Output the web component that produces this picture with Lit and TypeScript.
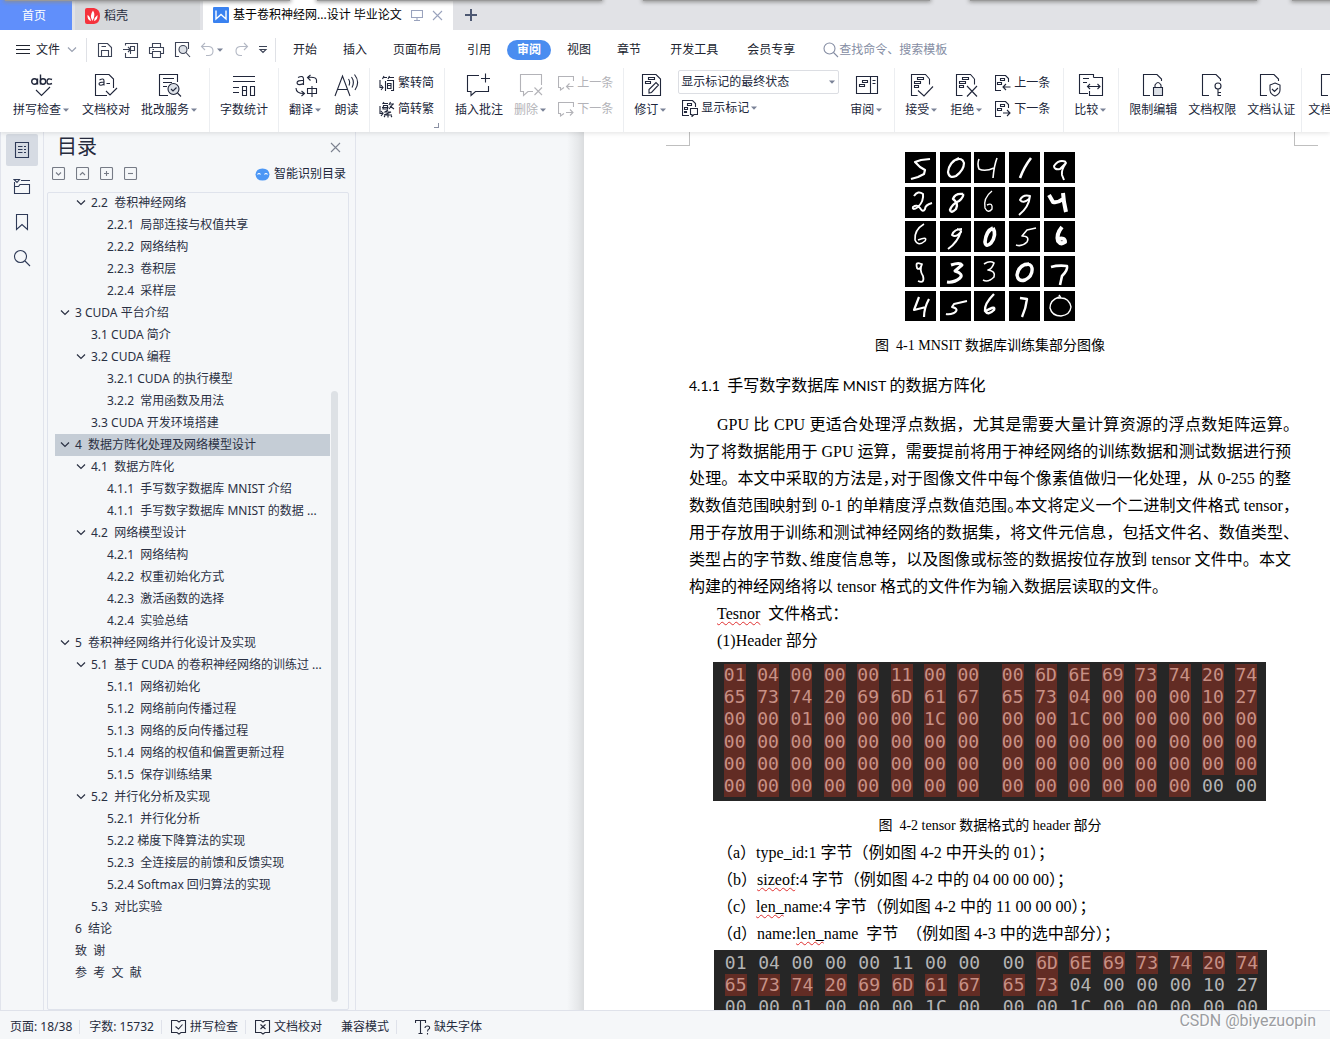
import { LitElement, html, svg, css, nothing } from "lit";
import { customElement, property, state } from "lit/decorators.js";
import { classMap } from "lit/directives/class-map.js";

const ic = (w: number, h: number, body: unknown, vb = `0 0 ${w} ${h}`) => svg`<svg width=${w} height=${h} viewBox=${vb} fill="none" stroke="currentColor" stroke-width="1.1" aria-hidden="true">${body}</svg>`;

const caret = html`<svg class="caret" width="6" height="4" viewBox="0 0 6 4" aria-hidden="true"><path d="M0 0.5H6L3 3.8Z" fill="#7a8297"/></svg>`;

const markedPage = svg`<path d="M19.500 6V11.500M7.500 22.500H1.500V1.500H15.500L19.500 6"/><path d="M7.500 4.500h6v2h-6zM4.500 8.500h6v2h-6zM4.500 12.500h4v2h-4z"/>`;
const plainPage = svg`<path d="M8 22.500H1.500V1.500H15L19.500 6V8"/>`;

const icons: Record<string, unknown> = {
  spell: ic(24, 24, svg`<g stroke-width="1.400"><circle cx="4.500" cy="8.500" r="2.800"/><path d="M7.500 5.500V11.500M10.500 1.500V11.500M22 6.500Q17 4.500 17 8.500Q17 12.500 22 10.500"/><circle cx="13" cy="8.500" r="2.700"/></g><path d="M6 17L11.500 22.500L20 14"/>`),
  proof: ic(24, 24, svg`<path d="M13 22.500H1.500V1.500H15L19.500 6V15"/><path d="M5.500 7Q10 4.500 10 8V12.500M10 9Q5 9 5 11Q6 13.500 10 11M12.500 10.500H16M12 18L16 22L23 15"/>`),
  service: ic(24, 24, svg`<path d="M10 22.500H1.500V1.500H19.500V9M5 5.500H16M5 9.500H14M5 13.500H9"/><circle cx="15.500" cy="16" r="5.500" fill="#dde1e7"/><path d="M19.500 20L23 23.500M13 16L15 18L18.500 14.500"/>`),
  count: ic(24, 24, svg`<path d="M1 3.500H23M1 8.500H23M1 14.500H7M1 19.500H7M10.500 13V22.500H14.500V13.500H10.500M10 17.500H14.500M18.500 13V22.500H22.500V13.500H18.500"/>`),
  translate: ic(24, 24, svg`<path d="M4 4.500Q9.500 2 9.500 6V12M9.500 7.500Q3 7 3 10Q4 13 9.500 10.500M22.500 10V7Q22 3.500 13.500 4.500M16.500 2L13.500 4.500L16.500 7.500M2 15Q2 20.500 10 20.500M7.500 18L10.500 20.500L7.500 23M13.500 15.500H22.500V20.500H13.500ZM18 13V24"/>`),
  read: ic(25, 24, svg`<path d="M1 23L8.500 3L16 23M3.500 16.500H13.500M14.500 6Q16.500 9 15 12.500M17.500 4Q21 9 18 14.500M20.500 1.500Q26.500 9 21 17"/>`),
  comment: ic(26, 24, svg`<path d="M13 2.500H1.500V18.500H5V22.500L9.500 18.500H22.500V13M19.500 0.500V9.500M15 5.500H24"/>`),
  remove: ic(24, 24, svg`<path d="M22.500 12V1.500H1.500V18.500H4.500V22.500L9 18.500H14M15.500 14.500L23 22M23 14.500L15.500 22"/>`),
  prevNote: ic(16, 16, svg`<path d="M15.500 6V1.500H0.500V12.500H2.500V15L6 12.500M15.500 11.500H8.500M11.500 8.500L8.500 11.500L11.500 14.500"/>`),
  nextNote: ic(16, 16, svg`<path d="M15.500 6V1.500H0.500V12.500H2.500V15L6 12.500M8 11.500H15M12 8.500L15 11.500L12 14.500"/>`),
  revise: ic(21, 24, svg`<path d="M1.500 22.500V1.500H15L19.500 6V22.500Z"/><path d="M7.500 4.500h6v2h-6zM4.500 8.500h5v2h-5zM8 20V16.500L15 9.500L17.500 12L10.500 19.500Z"/>`),
  pane: ic(24, 24, svg`<path d="M1.500 3.500H22.500V20.500H1.500ZM15.500 3.500V20.500M17.500 7.500H20.500M17.500 10.500H20.500M7.500 7.500h5v2h-5zM4.500 11.500h5v2h-5z"/>`),
  accept: ic(24, 24, svg`${markedPage}<path d="M8 17.500L14 23L23 13.500"/>`),
  reject: ic(24, 24, svg`${markedPage}<path d="M12 13L22 23.500M22 13L12 23.500"/>`),
  prevMark: ic(16, 16, svg`<path d="M6 15.500H0.500V0.500H10.500L13.500 3.500V7M5.500 3.500h4v2h-4zM2.500 7.500h4v2h-4zM15.500 12H8M11 9L8 12L11 15"/>`),
  nextMark: ic(16, 16, svg`<path d="M6 15.500H0.500V0.500H10.500L13.500 3.500V7M5.500 3.500h4v2h-4zM2.500 7.500h4v2h-4zM8 12H15M12 9L15 12L12 15"/>`),
  showMark: ic(16, 17, svg`<path d="M7 15.500H0.500V0.500H10.500L13.500 3.500V7M5.500 3.500h4v2h-4zM2.500 7.500h3v2h-3zM2.500 11.500h2v1h-2zM8.500 8.500H15.500V14.500H12L10 16.500V14.500H8.500Z"/>`),
  compare: ic(26, 24, svg`<path d="M10 20.500H1.500V1.500H15.500V4.500M15.500 4.500H24.500V22.500H11.500V18M5 5.500H11M5 9.500H9M9.500 13.500H22M12 11L9.500 13.500L12 16M19.500 11L22 13.500L19.500 16"/>`),
  restrict: ic(22, 24, svg`${plainPage}<path d="M11.500 14.500H20.500V22.500H11.500Z" fill="#dde1e7"/><path d="M13 14.500V12Q16 7 19 12V14.500"/>`),
  rights: ic(22, 24, svg`${plainPage}<circle cx="17" cy="13" r="3"/><path d="M17 16V23M17 19.500H20M17 22.500H20"/>`),
  cert: ic(24, 24, svg`${plainPage}<path d="M16 10L21 12V17Q21 21 16 23Q11 21 11 17V12ZM13 16L15.500 18.500L19 15"/>`),
  toSimple: ic(16, 17, svg`<path d="M5 1L3.500 4M4.500 2.500H8M10.500 1L9 4M10 2.500H15M6.500 6V16M8 5.500H14.500V15.500H12M8.500 8.500H12V13.500H8.500ZM8.500 10.500H12M1 5V12.500H3.500M2 10L4 12.500L2 15"/>`),
  toTrad: ic(16, 17, svg`<path d="M5 1L3.500 3M4 2.500H9M4.500 4.500H8.500V8H4ZM3 6.500H9.500M11.500 1L10 4M10.500 3H15M14 3L10 8M11 5L15 8M9 9L6 11H12L5 14H13M9 13V16.500M6 15L5 16M12 15L13 16M1 5V12.500H3.500M2 10L4 12.500L2 15"/>`),
  save: ic(16, 16, svg`<path d="M1.500 1.500H10.500L14.500 5.500V14.500H1.500ZM4.500 14V8.500H11.500V14M4.500 4.500H9"/>`),
  exportPdf: ic(17, 16, svg`<path d="M3.500 3.500V1.500H15.500V15.500H3.500V11M1 7.500H8M6 5L8.500 7.500L6 10M8.500 12V4.500H12.500V8.500H9"/>`),
  print: ic(17, 16, svg`<path d="M4.500 5V1.500H12.500V5M4 11.500H1.500V5.500H15.500V11.500H13M4.500 9.500H12.500V15.500H4.500ZM4.500 7.500H6"/>`),
  preview: ic(17, 17, svg`<path d="M5 15.500H1.500V1.500H14.500V8"/><circle cx="9" cy="8.500" r="4" fill="#dde1e7"/><path d="M12 11.500L16 16"/>`),
  undo: ic(15, 15, svg`<path d="M5 1L1.500 4.500L5 8M1.500 4.500H9Q13 5 13 9Q13 13.500 8.500 13.500H6"/>`),
  redo: ic(15, 15, svg`<path d="M10 1L13.500 4.500L10 8M13.500 4.500H6Q2 5 2 9Q2 13.500 6.500 13.500H8"/>`),
  more: ic(10, 9, svg`<path d="M1 1.500H9M2 4.500H8L5 7.500Z"/>`),
  search: ic(16, 16, svg`<circle cx="6.500" cy="6.500" r="5.500"/><path d="M10.500 10.500L15 15"/>`),
  navToc: ic(16, 18, svg`<path d="M1.500 1.500H14.500V16.500H1.500ZM4 5.500H8.500M10 5.500H12M4 8.500H8.500M10 8.500H12M4 11.500H8.500M10 11.500H12"/>`),
  navTree: ic(18, 18, svg`<path d="M1 2.500H6.500L4 5.500ZM8 3.500H17M1.500 5V16.500H16.500V7.500H7L5.500 9.500H1.500"/>`),
  navMark: ic(14, 18, svg`<path d="M1.500 1.500H12.500V16.500L7 11.500L1.500 16.500Z"/>`),
  navFind: ic(18, 18, svg`<circle cx="7.500" cy="7.500" r="6"/><path d="M12 12L17 17"/>`),
  boxDown: ic(14, 14, svg`<rect x="0.500" y="0.500" width="12" height="12" rx="1"/><path d="M4 5.500L6.500 8L9 5.500"/>`),
  boxUp: ic(14, 14, svg`<rect x="0.500" y="0.500" width="12" height="12" rx="1"/><path d="M4 8L6.500 5.500L9 8"/>`),
  boxPlus: ic(14, 14, svg`<rect x="0.500" y="0.500" width="12" height="12" rx="1"/><path d="M4 6.500H9M6.500 4V9"/>`),
  boxMinus: ic(14, 14, svg`<rect x="0.500" y="0.500" width="12" height="12" rx="1"/><path d="M4 6.500H9"/>`),
  close: ic(11, 11, svg`<path d="M1 1L10 10M10 1L1 10"/>`),
  screen: ic(12, 12, svg`<path d="M0.500 1.500H11.500V8.500H0.500ZM6 8.500V11.500M3 11.500H9"/>`),
  plus: ic(12, 12, svg`<path d="M6 0V12M0 6H12" stroke-width="2"/>`),
  menu: ic(14, 11, svg`<path d="M0 1.500H14M0 5.500H14M0 9.500H14"/>`),
  chev: ic(10, 6, svg`<path d="M1 0.500L5 4.500L9 0.500" stroke-width="1.200"/>`),
  stSpell: ic(16, 16, svg`<path d="M6 1.500H0.500V13.500H6L8 15L10 13.500H14.500V1.500H10L8 3ZM4.500 7.500L7.500 10L11.500 5.500"/>`),
  stProof: ic(16, 16, svg`<path d="M6 1.500H0.500V13.500H6L8 15L10 13.500H14.500V1.500H10L8 3ZM5.500 5.500L10.500 10M10.500 5.500L5.500 10"/>`),
  stFont: ic(16, 16, svg`<path d="M0.500 4V1.500H10.500V4M5.500 1.500V14M3.500 14.500H7.500M10 9Q10 7 12.500 7Q15 7 14.500 9.500Q12.500 10.500 12.500 12.500M12.500 14V15.500"/>`),
};

interface Entry { depth: number; text: string; open?: boolean; }
const toc: Entry[] = [
  { depth: 1, text: "2.2  卷积神经网络", open: true },
  { depth: 2, text: "2.2.1  局部连接与权值共享" },
  { depth: 2, text: "2.2.2  网络结构" },
  { depth: 2, text: "2.2.3  卷积层" },
  { depth: 2, text: "2.2.4  采样层" },
  { depth: 0, text: "3 CUDA 平台介绍", open: true },
  { depth: 1, text: "3.1 CUDA 简介" },
  { depth: 1, text: "3.2 CUDA 编程", open: true },
  { depth: 2, text: "3.2.1 CUDA 的执行模型" },
  { depth: 2, text: "3.2.2  常用函数及用法" },
  { depth: 1, text: "3.3 CUDA 开发环境搭建" },
  { depth: 0, text: "4  数据方阵化处理及网络模型设计", open: true },
  { depth: 1, text: "4.1  数据方阵化", open: true },
  { depth: 2, text: "4.1.1  手写数字数据库 MNIST 介绍" },
  { depth: 2, text: "4.1.1  手写数字数据库 MNIST 的数据 ..." },
  { depth: 1, text: "4.2  网络模型设计", open: true },
  { depth: 2, text: "4.2.1  网络结构" },
  { depth: 2, text: "4.2.2  权重初始化方式" },
  { depth: 2, text: "4.2.3  激活函数的选择" },
  { depth: 2, text: "4.2.4  实验总结" },
  { depth: 0, text: "5  卷积神经网络并行化设计及实现", open: true },
  { depth: 1, text: "5.1  基于 CUDA 的卷积神经网络的训练过 ...", open: true },
  { depth: 2, text: "5.1.1  网络初始化" },
  { depth: 2, text: "5.1.2  网络前向传播过程" },
  { depth: 2, text: "5.1.3  网络的反向传播过程" },
  { depth: 2, text: "5.1.4  网络的权值和偏置更新过程" },
  { depth: 2, text: "5.1.5  保存训练结果" },
  { depth: 1, text: "5.2  并行化分析及实现", open: true },
  { depth: 2, text: "5.2.1  并行化分析" },
  { depth: 2, text: "5.2.2 梯度下降算法的实现" },
  { depth: 2, text: "5.2.3  全连接层的前馈和反馈实现" },
  { depth: 2, text: "5.2.4 Softmax 回归算法的实现" },
  { depth: 1, text: "5.3  对比实验" },
  { depth: 0, text: "6  结论" },
  { depth: 0, text: "致  谢" },
  { depth: 0, text: "参  考  文  献" },
];

/* Handwriting samples: [stroke width, path] in a 31-unit cell, row by row. */
const samples: [number, string][] = [
  [2.2, "M25 7L16 8L10 10L15 15L20 18L19 22L13 25L6 27"],
  [2.2, "M19 6Q9 10 8 20Q9 27 16 24Q24 18 24 11Q22 5 16 8"],
  [1.6, "M5 7Q3 12 5 17Q11 20 20 16M23 6Q20 14 19 26"],
  [2.6, "M22 6Q15 15 11 26"],
  [2, "M22 10Q15 7 10 14Q10 18 16 17L22 11Q17 18 18 23L20 28"],
  [2, "M9 9Q13 3 18 7Q19 14 13 20Q7 24 8 20Q12 17 15 21Q18 26 20 22Q20 18 27 16"],
  [2.4, "M23 7Q15 6 13 12Q19 16 16 22Q11 27 10 23Q12 17 19 14Q24 10 23 7"],
  [1.4, "M18 4Q9 11 11 21Q14 27 18 22Q19 15 13 18"],
  [2, "M21 9Q14 7 11 13Q14 17 20 12L21 9Q20 20 10 28"],
  [4, "M5 8L9 15Q14 16 19 12M19 6L20 15L22 25"],
  [1.6, "M19 3Q9 9 10 19Q13 26 20 20Q23 15 13 19"],
  [2, "M22 8Q14 8 12 14Q16 17 21 11Q22 9 17 8M21 10Q18 21 8 28"],
  [3.6, "M19 7Q12 10 11 21Q12 27 17 22Q23 14 19 7"],
  [1.6, "M27 7L18 9L13 15Q21 15 18 21Q13 26 7 24"],
  [4, "M18 6Q12 13 14 20Q17 24 21 21Q21 16 14 18"],
  [1.8, "M16 8Q10 5 12 12Q15 15 17 8Q14 14 18 20Q20 28 13 25"],
  [3, "M11 9Q20 6 22 9L15 15Q24 18 20 22Q14 27 7 26"],
  [1.6, "M10 8Q16 4 20 7Q18 13 14 14Q22 15 20 21Q14 27 9 24"],
  [3.4, "M20 8Q10 8 8 19Q9 26 16 24Q24 20 23 12Q22 7 16 9"],
  [2.6, "M7 11Q14 9 23 10Q24 14 18 20L16 29"],
  [2.2, "M14 6L9 19L21 16M24 8Q19 17 19 26"],
  [2, "M27 10L14 13L12 16Q20 18 14 22Q9 24 6 23"],
  [2.4, "M20 3Q10 13 11 20Q14 25 20 19Q22 14 12 20"],
  [2.4, "M11 7L18 8Q17 17 13 26"],
  [1.4, "M15 6Q6 9 6 17Q8 25 17 25Q26 24 27 16Q25 7 17 7L13 7M17 7L15 4"],
];

const hexRows = [
  "01 04 00 00 00 11 00 00 00 6D 6E 69 73 74 20 74",
  "65 73 74 20 69 6D 61 67 65 73 04 00 00 00 10 27",
  "00 00 01 00 00 00 1C 00 00 00 1C 00 00 00 00 00",
  "00 00 00 00 00 00 00 00 00 00 00 00 00 00 00 00",
  "00 00 00 00 00 00 00 00 00 00 00 00 00 00 00 00",
  "00 00 00 00 00 00 00 00 00 00 00 00 00 00 00 00",
].map((r) => r.split(" "));

@customElement("hex-dump")
export class HexDump extends LitElement {
  @property({ type: Number }) from = 0;
  @property({ type: Number }) to = 0;

  static styles = css`
    :host { display: block; background: #262626; padding: 2px 3px 4px 5px; }
    table { width: 100%; table-layout: fixed; border-collapse: collapse; font: 18px/22px "DejaVu Sans Mono", monospace; color: #b4b4b4; }
    td { padding: 0; height: 22px; text-align: center; }
    .gap { width: 11px; }
    .byte { display: block; width: 22px; margin: 0 auto; }
    .on { background: #622c24; color: #c79186; }
    tr:nth-child(3) .byte { padding-bottom: 1px; }
  `;

  render() {
    return html`<table><tbody>${hexRows.map((row, r) => html`<tr>${row.map((b, c) => {
      const i = r * 16 + c;
      return html`${c === 8 ? html`<td class="gap"></td>` : nothing}<td><span class=${classMap({ byte: true, on: i >= this.from && i < this.to })}>${b}</span></td>`;
    })}</tr>`)}</tbody></table>`;
  }
}

@customElement("app-root")
export class AppRoot extends LitElement {
  @state() private selected = 11;
  @state() private tab = "审阅";

  static styles = css`
    :host { display: block; font: 12px/18px "Noto Sans", "Noto Sans CJK SC", sans-serif; color: #262b3d; }
    * { box-sizing: border-box; }
    button, select, input { font: inherit; color: inherit; background: none; border: 0; padding: 0; margin: 0; border-radius: 0; white-space: nowrap; }
    svg { display: block; flex: none; }
    h1, h2, p, ul, figure { margin: 0; padding: 0; font-weight: 400; list-style: none; }
    .app { height: 100vh; min-height: 480px; display: grid; grid-template-rows: 30px 102px minmax(0, 1fr) 29px; grid-template-columns: minmax(0, 1fr); overflow: hidden; position: relative; background: #f5f7f9; }

    .tabs { display: flex; background: #e1e2e6; }
    .tabs > * { padding-top: 2px; }
    .tabs .home { width: 72px; background: #608ffb; color: #fff; padding-right: 4px; }
    .docer { width: 125px; margin: 0 3px; background: #d6d8db; display: flex; align-items: center; gap: 4px; }
    .tabs .docer { padding-left: 10px; }
    .doc { width: 250px; background: #fff; display: flex; align-items: center; padding: 0 11px 0 10px; color: #000; }
    .doc .name { margin: 0 auto 0 4px; white-space: nowrap; }
    .doc .tool { color: #9aa3bd; margin-left: 9px; }
    .tabs .add { color: #4d5872; padding: 0 12px; }
    .edge { position: absolute; top: -2px; left: 5px; right: 0; display: grid; grid-template-columns: 285px 27px 285px 41px 287px 40px 287px 35px 287px; pointer-events: none; }
    .edge span { height: 3px; }
    .edge span:nth-child(odd) { background: #999; box-shadow: 0 0 4px 1px #8d8d8d; }

    .ribbon { background: #fff; position: relative; z-index: 1; box-shadow: 0 1px 5px rgba(0, 0, 0, 0.12); overflow: hidden; clip-path: inset(0 0 -6px 0); }
    .menu { display: flex; align-items: center; height: 38px; color: #20242f; padding-top: 1px; }
    .quick { display: flex; align-items: center; gap: 9px; padding: 0 7px 0 10px; color: #3c4356; height: 24px; border-left: 1px solid #dfe1e6; border-right: 1px solid #dfe1e6; }
    .quick .off { color: #b3b8c4; }
    .file { display: flex; align-items: center; gap: 6px; padding: 0 9px 0 16px; }
    .file svg:last-child { color: #9aa1b1; margin-left: 1px; }
    .mtabs { display: flex; padding-left: 4px; }
    .mtab { padding: 1px 13px; }
    .mtab.wide { margin-left: 3px; }
    .mtab.on { background: #4a8df0; color: #fff; border-radius: 10px; padding: 1px 10px; margin: 0 3px; font-weight: 700; }
    .find { display: flex; align-items: center; color: #858da3; margin-left: 15px; }
    .find input { width: 120px; color: #858da3; outline: 0; }
    .find input::placeholder { color: #858da3; opacity: 1; }

    .tools { display: flex; align-items: stretch; height: 64px; gap: 11px; padding-left: 13px; color: #20263a; }
    .tool-btn { display: flex; flex-direction: column; align-items: center; gap: 4px; padding-top: 5px; height: 56px; flex: none; }
    .lab { display: flex; align-items: center; }
    .lab .caret { margin: 0 2px 0 2px; }
    .off { color: #b3b3b8; }
    .sep { width: 1px; background: #eceef1; margin: 0 -1px; flex: none; }
    .sep.tight { margin: 0 -5px; }
    .pair { display: flex; flex-direction: column; gap: 8px; padding-top: 6px; margin-left: -1px; flex: none; position: relative; }
    .mini { display: flex; align-items: center; gap: 3px; height: 18px; }
    .pair.apart { margin-right: 3px; margin-left: 0; }
    .corner { position: absolute; right: -5px; bottom: 4px; width: 5px; height: 5px; border: solid #8a90a3; border-width: 0 1px 1px 0; }
    .picker { display: block; position: relative; width: 161px; flex: none; }
    .picker select { appearance: none; display: block; width: 100%; height: 24px; border: 1px solid #dcdee3; border-radius: 2px; padding: 0 2px; }
    .picker .caret { position: absolute; right: 4px; top: 10px; }
    .show { display: flex; flex-direction: column; gap: 5px; padding-top: 2px; flex: none; margin-left: -1px; }
    .show .mini { margin-left: 4px; }

    .work { display: flex; min-height: 0; }
    .rail { width: 44px; border: solid #e1e4ec; border-width: 0 1px; display: flex; flex-direction: column; gap: 4px; padding: 2px 5px; flex: none; color: #2e3a57; }
    .rail button { height: 32px; display: grid; place-items: center; border-radius: 2px; }
    .rail .on { background: #d6dbe3; }
    .panel { width: 312px; flex: none; border-right: 1px solid #e1e4ec; display: flex; flex-direction: column; padding: 0 6px 0 3px; }
    .head { display: flex; justify-content: space-between; align-items: center; height: 30px; padding: 0 8px 0 10px; }
    .head h1 { font-size: 20px; line-height: 30px; }
    .head button { color: #7c8290; }
    .acts { display: flex; gap: 10px; height: 30px; align-items: center; padding-left: 5px; padding-bottom: 6px; color: #767b86; }
    .acts .smart { margin-left: auto; display: flex; gap: 4px; align-items: center; color: #20263a; padding-right: 3px; }
    .tree { flex: 1; min-height: 0; border: 1px solid #dfe3ec; border-radius: 2px; display: flex; padding: 0 10px 0 7px; }
    .list { flex: 1; overflow: hidden; min-width: 0; margin-top: -1px; }
    .row { display: flex; align-items: center; gap: 5px; width: 100%; height: 22px; white-space: pre; text-align: left; padding-left: 5px; color: #2a3043; }
    .d1 { padding-left: 21px; }
    .d2 { padding-left: 37px; }
    .row .twist { width: 10px; flex: none; white-space: normal; }
    .row.d2 .twist { display: none; }
    .row.d2 { padding-left: 52px; }
    .row.on { background: #c5cdd6; }
    .track { width: 7px; margin-left: 1px; display: flex; flex-direction: column; padding-bottom: 7px; }
    .before { flex: 198; }
    .thumb { flex: 612; background: #dde1e5; border-radius: 4px; }
    .canvas { flex: 1; min-width: 0; display: flex; overflow: hidden; }
    .gutter { flex: 0 1 228px; background: linear-gradient(to left, #dadcde, #e6e8ea 6px, #f5f7f9 17px); }

    .page { flex: 1; min-width: 640px; background: #fff; color: #000; font: 16px/27px "Liberation Serif", "Noto Sans CJK SC", serif; }
    .crops { display: flex; justify-content: space-between; padding: 0 12px 0 82px; }
    .crops span { width: 24px; height: 14px; border: solid #bfbfbf; border-width: 0 1px 1px 0; }
    .crops span:last-child { border-width: 0 0 1px 1px; }
    .body { padding: 6px 39px 0 105px; }
    .samples svg { margin: 0 auto; }
    .caption { text-align: center; font-size: 14px; white-space: pre; margin-top: 11px; display: block; }
    .body h2 { font-size: 16px; line-height: 27px; margin: 13px 0 12px; white-space: pre; }
    .body h2 span { font-family: Lato, sans-serif; font-size: 14px; }
    .ln { display: block; text-align: justify; text-align-last: justify; white-space: nowrap; }
    .ln.in, .item { padding-left: 28px; }
    .ln.end { text-align-last: left; }
    .item { white-space: pre; }
    .half { font-feature-settings: "halt"; }
    .bad { text-decoration: underline wavy #e03030 1px; text-underline-offset: 2px; }
    .hex { margin: 8px 25px 0 24px; }
    .hex.second { margin: 3px 24px 0 25px; }

    .status { display: flex; align-items: center; border-top: 1px solid #dfe2ea; background: #f5f7f9; padding: 3px 0 0 10px; white-space: pre; }
    .status .bar { width: 1px; height: 14px; background: #dfe2ea; margin: 0 9px 0 7px; }
    .tag { display: flex; align-items: center; gap: 3px; }
    .status .push { margin-left: 19px; }
    .status .missing { margin-left: 9px; }
    .mark { position: absolute; right: 14px; bottom: 6px; font: 16px/24px Roboto, "Liberation Sans", sans-serif; color: #9b9da1; text-shadow: 1px 1px 0 #fff; }
  `;

  private big(icon: string, label: string, drop = false, off = false) {
    return html`<button class=${classMap({ "tool-btn": true, off })} ?disabled=${off}>${icons[icon]}<span class="lab">${label}${drop ? caret : nothing}</span></button>`;
  }

  private mini(icon: string, label: string, off = false, drop = false) {
    return html`<button class=${classMap({ mini: true, off })} ?disabled=${off}>${icons[icon]}<span class="lab">${label}${drop ? caret : nothing}</span></button>`;
  }

  private tabsBar() {
    return html`<nav class="tabs">
      <button class="home">首页</button>
      <button class="docer">
        <svg width="15" height="16" viewBox="0 0 15 16" aria-hidden="true"><path d="M2 0H9Q15 1 15 8Q15 15 9 16H2Q0 16 0 14V2Q0 0 2 0Z" fill="#f5323c"/><path d="M7.500 13Q4 8 8 2.500Q11 7 7.500 13ZM6 13Q2 12 2.500 7Q5 8 6 13ZM9 13Q9.500 9 12.500 7Q13 12 9 13Z" fill="#fff"/></svg>
        稻壳</button>
      <div class="doc">
        <svg width="16" height="16" viewBox="0 0 16 16" aria-hidden="true"><rect width="16" height="16" rx="1" fill="#3a82f0"/><path d="M3 3.500V12L8 7.500L13 12V3.500" fill="none" stroke="#fff" stroke-width="1.400"/></svg>
        <span class="name">基于卷积神经网...设计 毕业论文</span>
        <button class="tool" aria-label="窗口">${icons.screen}</button>
        <button class="tool" aria-label="关闭">${icons.close}</button>
      </div>
      <button class="add" aria-label="新建">${icons.plus}</button>
    </nav>
    <div class="edge">${toc.slice(0, 9).map(() => html`<span></span>`)}</div>`;
  }

  private ribbon() {
    const names = ["开始", "插入", "页面布局", "引用", "审阅", "视图", "章节", "开发工具", "会员专享"];
    return html`<header class="ribbon">
      <div class="menu">
        <button class="file">${icons.menu}文件${icons.chev}</button>
        <div class="quick">
          <button aria-label="保存">${icons.save}</button>
          <button aria-label="输出">${icons.exportPdf}</button>
          <button aria-label="打印">${icons.print}</button>
          <button aria-label="预览">${icons.preview}</button>
          <button class="lab off" aria-label="撤销">${icons.undo}${caret}</button>
          <button class="off" aria-label="恢复">${icons.redo}</button>
          <button aria-label="更多">${icons.more}</button>
        </div>
        <div class="mtabs">${names.map((n) => html`<button class=${classMap({ mtab: true, on: n === this.tab, wide: n === "开发工具" || n === "会员专享" })} @click=${() => (this.tab = n)}>${n}</button>`)}</div>
        <label class="find">${icons.search}<input aria-label="查找" placeholder="查找命令、搜索模板"></label>
      </div>
      <div class="tools">
        ${this.big("spell", "拼写检查", true)}${this.big("proof", "文档校对")}${this.big("service", "批改服务", true)}
        <i class="sep"></i>${this.big("count", "字数统计")}
        <i class="sep"></i>${this.big("translate", "翻译", true)}${this.big("read", "朗读")}
        <i class="sep"></i>
        <div class="pair">${this.mini("toSimple", "繁转简")}${this.mini("toTrad", "简转繁")}<i class="corner"></i></div>
        <i class="sep"></i>${this.big("comment", "插入批注")}${this.big("remove", "删除", true, true)}
        <div class="pair">${this.mini("prevNote", "上一条", true)}${this.mini("nextNote", "下一条", true)}</div>
        <i class="sep"></i>${this.big("revise", "修订", true)}
        <div class="show">
          <label class="picker"><select aria-label="标记状态"><option>显示标记的最终状态</option></select>${caret}</label>
          ${this.mini("showMark", "显示标记", false, true)}
        </div>
        ${this.big("pane", "审阅", true)}
        <i class="sep"></i>${this.big("accept", "接受", true)}${this.big("reject", "拒绝", true)}
        <div class="pair apart">${this.mini("prevMark", "上一条")}${this.mini("nextMark", "下一条")}</div>
        <i class="sep"></i>${this.big("compare", "比较", true)}
        <i class="sep"></i>${this.big("restrict", "限制编辑")}${this.big("rights", "文档权限")}${this.big("cert", "文档认证")}
        <i class="sep tight"></i>${this.big("cert", "文档定稿")}
      </div>
    </header>`;
  }

  private panel() {
    return html`<nav class="rail">
        <button class="on" aria-label="目录">${icons.navToc}</button>
        <button aria-label="章节">${icons.navTree}</button>
        <button aria-label="书签">${icons.navMark}</button>
        <button aria-label="查找">${icons.navFind}</button>
      </nav>
      <aside class="panel">
        <div class="head"><h1>目录</h1><button aria-label="关闭">${icons.close}</button></div>
        <div class="acts">
          <button aria-label="展开">${icons.boxDown}</button>
          <button aria-label="收起">${icons.boxUp}</button>
          <button aria-label="增加">${icons.boxPlus}</button>
          <button aria-label="减少">${icons.boxMinus}</button>
          <button class="smart"><svg width="15" height="13" viewBox="0 0 15 13" aria-hidden="true"><path d="M7.500 0.500Q14 0.500 14.500 6.500Q14 12.500 7.500 12.500Q1 12.500 0.500 6.500Q1 0.500 7.500 0.500Z" fill="#4c97f5"/><path d="M2.500 6.500Q4 4.500 5.500 6.500M9.500 6.500Q11 4.500 12.500 6.500" fill="none" stroke="#fff" stroke-width="1.200"/></svg>智能识别目录</button>
        </div>
        <div class="tree">
          <ul class="list">${toc.map((e, i) => html`<li><button class=${classMap({ row: true, [`d${e.depth}`]: true, on: i === this.selected })} @click=${() => (this.selected = i)}><span class="twist">${e.open ? icons.chev : nothing}</span><span>${e.text}</span></button></li>`)}</ul>
          <div class="track"><i class="before"></i><i class="thumb"></i></div>
        </div>
      </aside>`;
  }

  private page() {
    const half = (t: string) => html`<span class="half">${t}</span>`;
    const bad = (t: string) => html`<span class="bad">${t}</span>`;
    return html`<main class="canvas"><div class="gutter"></div><article class="page">
      <div class="crops"><span></span><span></span></div>
      <div class="body">
        <figure class="samples">
          <svg width="170" height="169" viewBox="0 0 170 169" role="img" aria-label="MNIST">${samples.map(([w, d], i) => svg`<g transform="translate(${Math.round((i % 5) * 34.7)} ${Math.round(Math.floor(i / 5) * 34.7)})"><rect width="31" height="31" fill="#000"/><path d=${d} fill="none" stroke="#fff" stroke-width=${w} stroke-linejoin="round"/></g>`)}</svg>
          <figcaption class="caption">图  4-1 MNSIT 数据库训练集部分图像</figcaption>
        </figure>
        <h2><span>4.1.1  </span>手写数字数据库<span> MNIST </span>的数据方阵化</h2>
        <p>
          <span class="ln in">GPU 比 CPU 更适合处理浮点数据，尤其是需要大量计算资源的浮点数矩阵运算${half("。")}</span>
          <span class="ln">为了将数据能用于 GPU 运算，需要提前将用于神经网络的训练数据和测试数据进行预</span>
          <span class="ln">处理。本文中采取的方法是${half("，")}对于图像文件中每个像素值做归一化处理，从 0-255 的整</span>
          <span class="ln">数数值范围映射到 0-1 的单精度浮点数值范围${half("。")}本文将定义一个二进制文件格式 tensor${half("，")}</span>
          <span class="ln">用于存放用于训练和测试神经网络的数据集，将文件元信息，包括文件名、数值类型${half("、")}</span>
          <span class="ln">类型占的字节数${half("、")}维度信息等，以及图像或标签的数据按位存放到 tensor 文件中。本文</span>
          <span class="ln end">构建的神经网络将以 tensor 格式的文件作为输入数据层读取的文件。</span>
        </p>
        <p class="item">${bad("Tesnor")}  文件格式${half("：")}</p>
        <p class="item">(1)Header 部分</p>
        <hex-dump class="hex" from="0" to="94"></hex-dump>
        <p class="caption">图  4-2 tensor 数据格式的 header 部分</p>
        <p class="item">（a）type_id:1 字节（例如图 4-2 中开头的 01${half("）")}；</p>
        <p class="item">（b）${bad("sizeof")}:4 字节（例如图 4-2 中的 04 00 00 00${half("）")}；</p>
        <p class="item">（c）${bad("len_")}name:4 字节（例如图 4-2 中的 11 00 00 00${half("）")}；</p>
        <p class="item">（d）name:${bad("len_")}name  字节  （例如图 4-3 中的选中部分${half("）")}；</p>
        <hex-dump class="hex second" from="9" to="26"></hex-dump>
      </div>
    </article></main>`;
  }

  render() {
    return html`<div class="app">
      ${this.tabsBar()}
      ${this.ribbon()}
      <div class="work">${this.panel()}${this.page()}</div>
      <footer class="status">
        <span>页面: 18/38</span><i class="bar"></i><span>字数: 15732</span><i class="bar"></i>
        <button class="tag">${icons.stSpell}拼写检查</button><i class="bar"></i>
        <button class="tag">${icons.stProof}文档校对</button>
        <span class="push">兼容模式</span><i class="bar"></i>
        <button class="tag missing">${icons.stFont}缺失字体</button>
      </footer>
      <div class="mark">CSDN @biyezuopin</div>
    </div>`;
  }
}
